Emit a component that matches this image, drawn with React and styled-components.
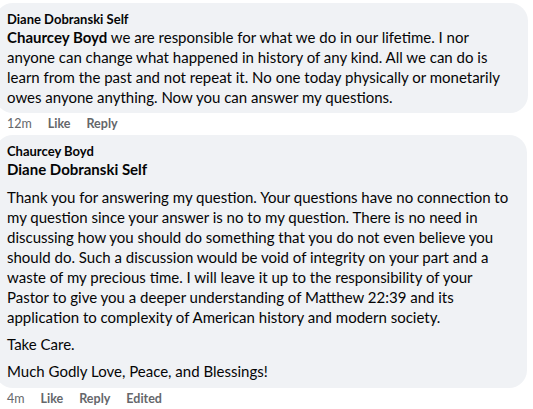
import React from "react";
import styled, { createGlobalStyle } from "styled-components";

const GlobalStyle = createGlobalStyle`
  html, body { margin: 0; padding: 0; background: #ffffff; }
  body {
    font-family: Lato, "Segoe UI", Roboto, "Liberation Sans", sans-serif;
    color: #050505;
    -webkit-font-smoothing: antialiased;
  }
`;

const Thread = styled.div`
  display: flex;
  flex-direction: column;
  padding-top: 3px;
  margin-left: -5px;
  width: 533px;
  overflow: hidden;
`;

const Comment = styled.div`
  display: flex;
  flex-direction: column;
  align-items: flex-start;
`;

const Bubble = styled.div`
  background: #f0f2f5;
  border-radius: 18px;
  padding: 8px 12px ${(p) => p.$padBottom || 6}px 12px;
  width: ${(p) => p.$width}px;
  box-sizing: border-box;
`;

const Author = styled.div`
  font-size: 13px;
  line-height: 16px;
  font-weight: 700;
  color: #050505;
`;

const Tag = styled.div`
  font-size: 15px;
  line-height: 20px;
  font-weight: 700;
  color: #050505;
  margin-bottom: 8px;
`;

const Body = styled.div`
  font-size: 15px;
  line-height: 20px;
  font-weight: 400;
  white-space: nowrap;
  & + & {
    margin-top: 7px;
  }
`;

const Mention = styled.span`
  font-weight: 700;
`;

const Actions = styled.div`
  display: flex;
  align-items: center;
  gap: 16px;
  padding: 3px 0 3px 12px;
  font-size: 12.5px;
  line-height: 16px;
  color: #65676b;
`;

const Time = styled.span`
  font-weight: 400;
`;

const Action = styled.span`
  font-weight: 700;
  cursor: pointer;
`;

export default function App() {
  return (
    <>
      <GlobalStyle />
      <Thread>
        <Comment>
          <Bubble $width={533}>
            <Author>Diane Dobranski Self</Author>
            <Body>
              <Mention>Chaurcey Boyd</Mention> we are responsible for what we do in our lifetime. I nor
              <br />
              anyone can change what happened in history of any kind. All we can do is
              <br />
              learn from the past and not repeat it. No one today physically or monetarily
              <br />
              owes anyone anything. Now you can answer my questions.
            </Body>
          </Bubble>
          <Actions>
            <Time>12m</Time>
            <Action>Like</Action>
            <Action>Reply</Action>
          </Actions>
        </Comment>
        <Comment>
          <Bubble $width={532} $padBottom={7}>
            <Author>Chaurcey Boyd</Author>
            <Tag>Diane Dobranski Self</Tag>
            <Body>
              Thank you for answering my question. Your questions have no connection to
              <br />
              my question since your answer is no to my question. There is no need in
              <br />
              discussing how you should do something that you do not even believe you
              <br />
              should do. Such a discussion would be void of integrity on your part and a
              <br />
              waste of my precious time. I will leave it up to the responsibility of your
              <br />
              Pastor to give you a deeper understanding of Matthew 22:39 and its
              <br />
              application to complexity of American history and modern society.
            </Body>
            <Body>Take Care.</Body>
            <Body>Much Godly Love, Peace, and Blessings!</Body>
          </Bubble>
          <Actions>
            <Time>4m</Time>
            <Action>Like</Action>
            <Action>Reply</Action>
            <Action>Edited</Action>
          </Actions>
        </Comment>
      </Thread>
    </>
  );
}
